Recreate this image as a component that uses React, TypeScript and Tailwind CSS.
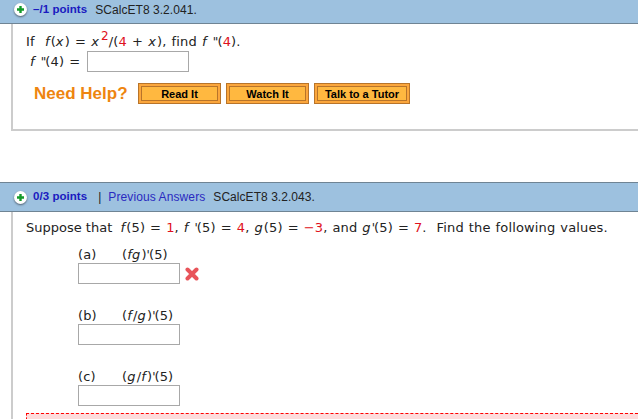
const sans = "font-['Liberation_Sans',Arial,sans-serif]";

function R({ children }: { children: React.ReactNode }) {
  return <span className="text-[#e01020]">{children}</span>;
}

function I({ children }: { children: React.ReactNode }) {
  return <i className="italic pr-[1px]">{children}</i>;
}

function Prime({ double }: { double?: boolean }) {
  return <i className="italic text-[12px] tracking-[-1px]">{double ? "''" : "'"}</i>;
}

function PlusIcon() {
  return (
    <span className="w-[13px] h-[13px] rounded-full bg-white shadow-[0_1px_2px_rgba(0,0,0,0.5)] flex items-center justify-center shrink-0">
      <svg width="9" height="9" viewBox="0 0 9 9">
        <path d="M4.5 1v7M1 4.5h7" stroke="#159a2a" strokeWidth="2.4" />
      </svg>
    </span>
  );
}

function Header({ className, children }: { className: string; children: React.ReactNode }) {
  return (
    <div className={`flex items-center pl-[14px] bg-[#9dc1df] border-b border-[#6f8494] text-[12px] text-[#222] tracking-[0.05px] ${sans} ${className}`}>
      <PlusIcon />
      {children}
    </div>
  );
}

function HelpButton({ label, width }: { label: string; width: string }) {
  return (
    <button className={`h-[21px] ${width} p-[2px] bg-[#fba63c] border border-[#b8742a] flex`}>
      <span className={`flex-1 border border-[#b8742a] bg-[#ffb840] text-[11px] font-bold text-black leading-[15px] ${sans}`}>{label}</span>
    </button>
  );
}

function Box() {
  return <div className="w-[102px] h-[21px] border border-[#a8a8a8] bg-white" />;
}

function Part({ tag, expr, mark, className }: { tag: string; expr: React.ReactNode; mark?: boolean; className: string }) {
  return (
    <div className={`ml-[65px] ${className}`}>
      <div className="flex h-[17px] leading-[17px] tracking-[0.15px]">
        <span className="w-[44px]">{tag}</span>
        <span>{expr}</span>
      </div>
      <div className="flex items-center gap-[5px]">
        <Box />
        {mark && (
          <svg width="14" height="14" viewBox="0 0 14 14">
            <path d="M2.5 2.5l9 9M11.5 2.5l-9 9" stroke="#e8545a" strokeWidth="4" strokeLinecap="round" />
          </svg>
        )}
      </div>
    </div>
  );
}

export default function App() {
  return (
    <div className="w-[638px] h-[419px] overflow-hidden bg-white font-['DejaVu_Sans',Verdana,sans-serif] text-[13px] text-[#222]">
      <Header className="h-[24px] pb-[4px]">
        <span className="ml-[6px] font-bold text-[11.5px] text-[#1a1ac0]">–/1 points</span>
        <span className="ml-[8px]">SCalcET8 3.2.041.</span>
      </Header>

      <div className="ml-[11px] h-[107px] border-l-2 border-b-2 border-[#cccccc] pl-[13px] pt-[9px]">
        <div className="h-[18px] leading-[18px] whitespace-pre tracking-[0.15px] [word-spacing:0.8px]">
          If  <I>f</I>(<I>x</I>) = <I>x</I><sup className="text-[#e01020] text-[12px] leading-none ml-[1px]">2</sup>/(<R>4</R> + <I>x</I>), find <I>f</I> <Prime double />(<R>4</R>).
        </div>
        <div className="flex items-center ml-[4px] h-[21px] whitespace-pre tracking-[0.15px] [word-spacing:0.7px]">
          <span className="w-[57px]"><I>f</I> <Prime double />(4) =</span>
          <Box />
        </div>
        <div className="flex items-center mt-[9px] ml-[8px]">
          <span className={`w-[104px] text-[17px] font-bold text-[#ee8510] ${sans}`}>Need Help?</span>
          <HelpButton label="Read It" width="w-[83px]" />
          <HelpButton label="Watch It" width="w-[83px] ml-[5px]" />
          <HelpButton label="Talk to a Tutor" width="w-[96px] ml-[5px]" />
        </div>
      </div>

      <Header className="h-[30px] mt-[51px] border-t">
        <span className="ml-[6px] font-bold text-[11.5px] text-[#1a1ac0]">0/3 points</span>
        <span className="ml-[11px]">|</span>
        <span className="ml-[7px] text-[#2a2ac0] tracking-[0.1px]">Previous Answers</span>
        <span className="ml-[8px]">SCalcET8 3.2.043.</span>
      </Header>

      <div className="ml-[11px] border-l-2 border-[#cccccc] h-[208px] flex flex-col">
        <div className="ml-[13px] mt-[7px] h-[18px] leading-[18px] whitespace-pre tracking-[0.15px] [word-spacing:0.7px]">
          <span className="tracking-normal [word-spacing:0px]">Suppose that  </span><I>f</I>(5) = <R>1</R>, <I>f</I> <Prime />(5) = <R>4</R>, <I>g</I>(5) = <R>−3</R>, and <I>g</I><Prime />(5) = <R>7</R>.  Find the following values.
        </div>
        <Part tag="(a)" expr={<>(<I>fg</I>)<Prime />(5)</>} mark className="mt-[9px]" />
        <Part tag="(b)" expr={<>(<I>f</I>/<I>g</I>)<Prime />(5)</>} className="mt-[23px]" />
        <Part tag="(c)" expr={<>(<I>g</I>/<I>f</I>)<Prime />(5)</>} className="mt-[23px]" />
        <div className="ml-[13px] mt-[7px] h-[8px] border-t border-l border-dashed border-t-[#ff0000] border-l-[#ff0000] bg-[#fddcdc]" />
      </div>
    </div>
  );
}
